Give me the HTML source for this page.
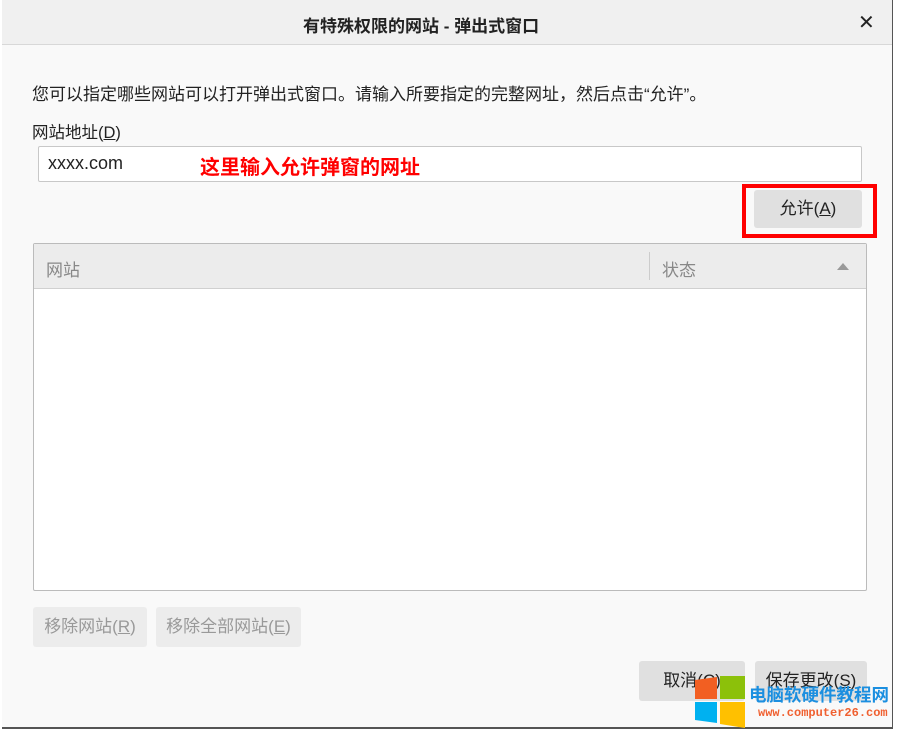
<!DOCTYPE html>
<html><head><meta charset="utf-8"><style>
*{margin:0;padding:0;box-sizing:border-box}
body{width:899px;height:732px;background:#fff;font-family:"Liberation Sans","Noto Sans CJK SC",sans-serif;position:relative;overflow:hidden;color:#222}
.dlg{position:absolute;left:2px;top:0;width:891px;height:729px;background:#f9f9f9;border-right:1px solid #555;border-bottom:2px solid #555}
.tb{position:absolute;left:0;top:0;width:100%;height:45px;background:#f0f0f0;border-bottom:1px solid #d8d8d8}
.a{position:absolute;white-space:nowrap}
.btn{position:absolute;background:#e0e0e0;border-radius:3px;font-size:16px;text-align:center}
u{text-decoration:underline}
</style></head><body>
<div class="dlg">
<div class="tb">
<div class="a" style="left:301px;top:12px;font-size:17px;font-weight:bold">有特殊权限的网站 - 弹出式窗口</div>
<div class="a" style="left:856px;top:10px;font-size:20px">✕</div>
</div>
<div class="a" style="left:30px;top:80px;font-size:17px">您可以指定哪些网站可以打开弹出式窗口。请输入所要指定的完整网址，然后点击“允许”。</div>
<div class="a" style="left:30px;top:119px;font-size:16.5px">网站地址(<u>D</u>)</div>
<div class="a" style="left:36px;top:146px;width:824px;height:36px;background:#fff;border:1px solid #c8c8c8;border-radius:2px"></div>
<div class="a" style="left:46px;top:153px;font-size:18px">xxxx.com</div>
<div class="a" style="left:198px;top:151px;font-size:20px;font-weight:bold;color:#f00">这里输入允许弹窗的网址</div>
<div class="btn" style="left:752px;top:190px;width:108px;height:38px;line-height:38px;font-size:17px">允许(<u>A</u>)</div>
<div class="a" style="left:740px;top:184px;width:135px;height:54px;border:4px solid #f00"></div>
<div class="a" style="left:31px;top:243px;width:834px;height:348px;background:#fff;border:1px solid #bbb;border-radius:2px"></div>
<div class="a" style="left:32px;top:244px;width:832px;height:45px;background:#ececec;border-bottom:1px solid #d0d0d0"></div>
<div class="a" style="left:44px;top:256px;font-size:17px;color:#888">网站</div>
<div class="a" style="left:647px;top:252px;width:1px;height:28px;background:#ccc"></div>
<div class="a" style="left:660px;top:256px;font-size:17px;color:#888">状态</div>
<div class="a" style="left:835px;top:263px;width:0;height:0;border-left:6px solid transparent;border-right:6px solid transparent;border-bottom:7px solid #999"></div>
<div class="btn" style="left:31px;top:607px;width:114px;height:40px;line-height:40px;background:#ececec;color:#999;font-size:17px">移除网站(<u>R</u>)</div>
<div class="btn" style="left:154px;top:607px;width:145px;height:40px;line-height:40px;background:#ececec;color:#999;font-size:17px">移除全部网站(<u>E</u>)</div>
<div class="btn" style="left:637px;top:661px;width:106px;height:40px;line-height:40px;font-size:17px">取消(<u>C</u>)</div>
<div class="btn" style="left:753px;top:661px;width:112px;height:40px;line-height:40px;font-size:17px">保存更改(<u>S</u>)</div>
</div>
<svg class="a" style="left:695px;top:676px" width="50" height="52" viewBox="0 0 50 52">
<path d="M0 4 L22 1 L22 23 L0 23Z" fill="#f25f22"/>
<path d="M25 0 L50 -3 L50 23 L25 23Z" fill="#8cc10a"/>
<path d="M0 26 L22 26 L22 47 L0 44Z" fill="#00b1f0"/>
<path d="M25 26 L50 26 L50 52 L25 48Z" fill="#ffc000"/>
</svg>
<div class="a" style="left:749px;top:682px;font-size:17.5px;font-weight:bold;color:#1b8fe0">电脑软硬件教程网</div>
<div class="a" style="left:758px;top:706px;font-size:12px;font-weight:bold;color:#f06030;font-family:'Liberation Mono',monospace">www.computer26.com</div>
</body></html>
